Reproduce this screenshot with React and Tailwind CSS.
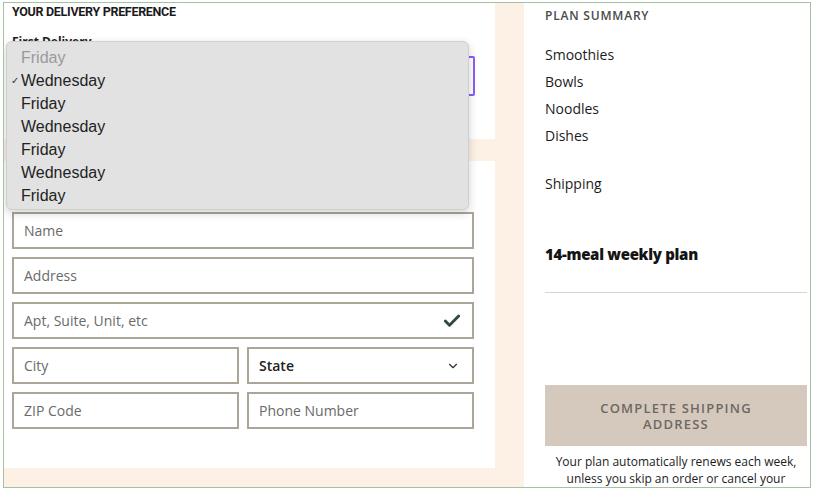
import { Check, ChevronDown } from "lucide-react";

const fields = [
  [{ label: "Name" }],
  [{ label: "Address" }],
  [{ label: "Apt, Suite, Unit, etc", check: true }],
  [{ label: "City" }, { label: "State", select: true }],
  [{ label: "ZIP Code" }, { label: "Phone Number" }],
];

const menuItems = ["Friday", "Wednesday", "Friday", "Wednesday", "Friday", "Wednesday", "Friday"];

function Field({ label, check, select }) {
  return (
    <div className="flex-1 h-[37px] border-2 border-[#aca699] bg-white flex items-center justify-between pl-[10px] pr-[10px]">
      <span className={select ? "text-[14px] font-semibold text-[#222]" : "text-[14px] text-[#6a6a6a]"}>{label}</span>
      {check && <Check size={20} strokeWidth={3.5} className="text-[#2f4c3e]" />}
      {select && <ChevronDown size={14} strokeWidth={2} className="text-[#333] mr-[2px]" />}
    </div>
  );
}

export default function App() {
  return (
    <div className="w-[814px] h-[490px] bg-white overflow-hidden pt-[2px] pl-[3px]" style={{ fontFamily: '"Open Sans", sans-serif' }}>
      <div className="relative w-[808px] h-[486px] border border-[#a3c1a3] bg-[#fdf1e6] flex overflow-hidden">
        {/* left column */}
        <div className="w-[491px] shrink-0 flex flex-col">
          <div className="h-[136px] shrink-0 bg-white px-[8px]">
            <h2 className="text-[12.5px] font-bold text-[#1b1b1b] tracking-[-0.3px] leading-[17px]" style={{ fontFamily: '"Roboto", sans-serif' }}>YOUR DELIVERY PREFERENCE</h2>
            <p className="mt-[14px] text-[12px] font-bold text-[#222] leading-[16px]">First Delivery</p>
            <div className="mt-[6px] h-[40px] w-[463px] border-2 border-[#8b5cf6] rounded-[2px]" />
          </div>
          <div className="mt-[22px] h-[307px] shrink-0 bg-white px-[8px] pt-[51px]">
            <div className="flex flex-col gap-[8px] w-[462px]">
              {fields.map((row, i) => (
                <div key={i} className="flex gap-[8px]">
                  {row.map((f) => (
                    <Field key={f.label} {...f} />
                  ))}
                </div>
              ))}
            </div>
          </div>
        </div>

        {/* right column */}
        <div className="ml-[29px] flex-1 bg-white pl-[21px] pr-[3px] pt-[4px] flex flex-col">
          <h3 className="text-[12px] font-semibold tracking-[0.8px] text-[#4a4a4a] leading-[17px]">PLAN SUMMARY</h3>
          <ul className="mt-[21px] flex flex-col gap-[7px] text-[14px] leading-[20px] font-medium text-[#1c1c1c]">
            <li>Smoothies</li>
            <li>Bowls</li>
            <li>Noodles</li>
            <li>Dishes</li>
            <li className="mt-[21px]">Shipping</li>
          </ul>
          <p className="mt-[50px] text-[15px] leading-[20px] font-extrabold text-[#141414] tracking-[-0.3px]">14-meal weekly plan</p>
          <div className="mt-[28px] shrink-0 border-t border-[#d6d6d6]" />
          <button className="mt-[92px] shrink-0 h-[61px] bg-[#d5c9bd] text-[#6d6862] text-[13px] font-semibold tracking-[1.2px] leading-[16px] px-10">
            COMPLETE SHIPPING ADDRESS
          </button>
          <p className="mt-[7px] shrink-0 text-center text-[12px] font-medium text-[#1c1c1c] leading-[17px]">
            Your plan automatically renews each week, unless you skip an order or cancel your subscription.
          </p>
        </div>

        {/* native select popup */}
        <div className="absolute left-[2px] top-[38px] w-[463px] h-[169px] rounded-[6px] bg-[#e2e2e2] border border-[#cfcfcf] shadow-[0_3px_10px_rgba(0,0,0,0.18)] pt-[4px]" style={{ fontFamily: '"Liberation Sans", Arial, sans-serif' }}>
          {menuItems.map((d, i) => (
            <div key={i} className={"relative h-[23px] flex items-center pl-[14px] text-[16px] " + (i === 0 ? "text-[#9a9a9a]" : "text-[#222]")}>
              {i === 1 && <span className="absolute left-[4px] text-[10px] text-[#333]">✓</span>}
              {d}
            </div>
          ))}
        </div>
      </div>
    </div>
  );
}
